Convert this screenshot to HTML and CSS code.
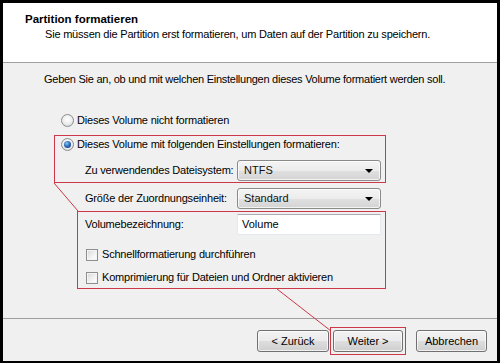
FILE: index.html
```html
<!DOCTYPE html>
<html lang="de">
<head>
<meta charset="utf-8">
<link rel="stylesheet" href="styles.css">
</head>
<body>
<div class="frame">
  <div class="header">
    <div class="title">Partition formatieren</div>
    <div class="subtitle">Sie müssen die Partition erst formatieren, um Daten auf der Partition zu speichern.</div>
  </div>
  <div class="content">
    <div class="intro">Geben Sie an, ob und mit welchen Einstellungen dieses Volume formatiert werden soll.</div>
    <div class="opts">
      <div class="choice first"><span class="radio"></span>Dieses Volume nicht formatieren</div>
      <div class="box box1">
        <div class="choice"><span class="radio checked"></span>Dieses Volume mit folgenden Einstellungen formatieren:</div>
        <div class="field fs"><span class="label">Zu verwendendes Dateisystem:</span><div class="combo"><span class="value">NTFS</span><span class="arrow"></span></div></div>
      </div>
      <div class="field unit"><span class="label">Größe der Zuordnungseinheit:</span><div class="combo"><span class="value">Standard</span><span class="arrow"></span></div></div>
      <div class="box box2">
        <div class="field vol"><span class="label">Volumebezeichnung:</span><div class="textbox">Volume</div></div>
        <div class="check c1"><span class="cb"></span>Schnellformatierung durchführen</div>
        <div class="check c2"><span class="cb"></span>Komprimierung für Dateien und Ordner aktivieren</div>
      </div>
    </div>
  </div>
  <div class="footer">
    <button class="btn">&lt; Zurück</button>
    <div class="mark"><button class="btn next">Weiter &gt;</button></div>
    <button class="btn cancel">Abbrechen</button>
  </div>
</div>
<svg class="overlay" width="500" height="363" viewBox="0 0 500 363">
  <line x1="54" y1="183" x2="78" y2="211" stroke="#cc3848" stroke-width="1"/>
  <line x1="277" y1="289" x2="331" y2="331" stroke="#cc3848" stroke-width="1"/>
</svg>
</body>
</html>
```

FILE: styles.css
```css
html, body {
  margin: 0;
  padding: 0;
  width: 500px;
  height: 363px;
  overflow: hidden;
}
body {
  position: relative;
  font-family: "Liberation Sans", Arial, sans-serif;
  font-size: 11px;
  letter-spacing: -0.2px;
  color: #000;
  background: #000;
}
.frame {
  box-sizing: border-box;
  width: 500px;
  height: 363px;
  border: 3px solid #000;
  border-bottom-width: 2px;
  background: #f0f0f0;
  display: flex;
  flex-direction: column;
}
.header {
  height: 60px;
  box-sizing: border-box;
  background: #fff;
  border-bottom: 1px solid #a0a0a0;
  padding: 9px 0 0 22px;
  line-height: 15px;
}
.title {
  font-weight: bold;
  font-size: 11.5px;
  letter-spacing: 0;
}
.subtitle {
  padding-left: 20px;
}
.content {
  flex: 1;
  line-height: 15px;
}
.intro {
  padding: 9px 0 0 41px;
  letter-spacing: -0.26px;
}
.opts {
  margin-left: 51px;
  width: 332px;
}
.choice {
  display: flex;
  align-items: center;
  height: 15px;
}
.choice.first {
  margin-top: 26px;
  padding-left: 7px;
}
.radio {
  box-sizing: border-box;
  width: 13px;
  height: 13px;
  border-radius: 50%;
  border: 1px solid #8a8c8e;
  background: radial-gradient(circle at 50% 40%, #ffffff 0%, #f0f0f0 45%, #cfd1d3 100%);
  margin-right: 3px;
  position: relative;
}
.radio.checked::after {
  content: "";
  position: absolute;
  left: 2px;
  top: 2px;
  width: 7px;
  height: 7px;
  border-radius: 50%;
  background: radial-gradient(circle at 40% 35%, #8fc6f5 0%, #2d6fbd 45%, #0d2a66 100%);
}
.box {
  border: 1px solid #cc3848;
  box-sizing: border-box;
}
.box1 {
  margin-top: 7px;
  padding: 1px 0 1px 6px;
}
.field {
  display: grid;
  grid-template-columns: 152px 144px;
  align-items: center;
}
.box1 .field {
  margin-top: 8px;
  padding-left: 24px;
}
.unit {
  margin-top: 5px;
  padding-left: 31px;
}
.box2 {
  margin-top: 2px;
  margin-left: 23px;
  width: 309px;
  padding: 2px 0 3px 7px;
}
.label {
  white-space: nowrap;
}
.combo {
  box-sizing: border-box;
  height: 21px;
  border: 1px solid #8a8a8a;
  border-radius: 3px;
  background: linear-gradient(#f4f4f4 0%, #ececec 50%, #e0e0e0 51%, #d4d4d4 100%);
  box-shadow: inset 0 0 0 1px rgba(255,255,255,0.7);
  padding-left: 6px;
  display: flex;
  align-items: center;
  position: relative;
}
.value {
  font-size: 11px;
  font-weight: 400;
  color: #111;
  letter-spacing: 0;
}
.arrow {
  position: absolute;
  right: 7px;
  top: 8px;
  width: 0;
  height: 0;
  border-left: 4px solid transparent;
  border-right: 4px solid transparent;
  border-top: 4px solid #000;
}
.textbox {
  box-sizing: border-box;
  height: 21px;
  background: #fff;
  border: 1px solid #e3e9ef;
  border-top-color: #abadb3;
  padding-left: 4px;
  display: flex;
  align-items: center;
  font-size: 11px;
  letter-spacing: 0;
}
.check {
  display: flex;
  align-items: center;
  height: 15px;
}
.c1 {
  margin-top: 12px;
}
.c2 {
  margin-top: 8px;
}
.cb {
  box-sizing: border-box;
  width: 12px;
  height: 12px;
  border: 1px solid #8e8f8f;
  background: linear-gradient(135deg, #d7d7d7 0%, #f4f4f4 60%, #ffffff 100%);
  box-shadow: inset 0 0 0 1px #f4f4f4;
  margin: 0 4px 0 1px;
}
.footer {
  box-sizing: border-box;
  height: 43px;
  border-top: 1px solid #a0a0a0;
  display: flex;
  justify-content: flex-end;
  align-items: center;
  padding: 1px 10px 0 0;
}
.btn {
  box-sizing: border-box;
  width: 72px;
  height: 22px;
  border: 1px solid #707070;
  border-radius: 3px;
  background: linear-gradient(#f2f2f2 0%, #ebebeb 50%, #dddddd 51%, #cfcfcf 100%);
  box-shadow: inset 0 0 0 1px rgba(255,255,255,0.7);
  font-family: "Liberation Sans", Arial, sans-serif;
  font-size: 11px;
  letter-spacing: 0;
  color: #000;
  padding: 0;
}
.mark {
  border: 1px solid #cc3848;
  padding: 2px;
  margin-left: 1px;
  display: flex;
}
.btn.next {
  width: 70px;
}
.btn.cancel {
  width: 71px;
  margin-left: 10px;
}
.overlay {
  position: absolute;
  left: 0;
  top: 0;
  pointer-events: none;
}
```
